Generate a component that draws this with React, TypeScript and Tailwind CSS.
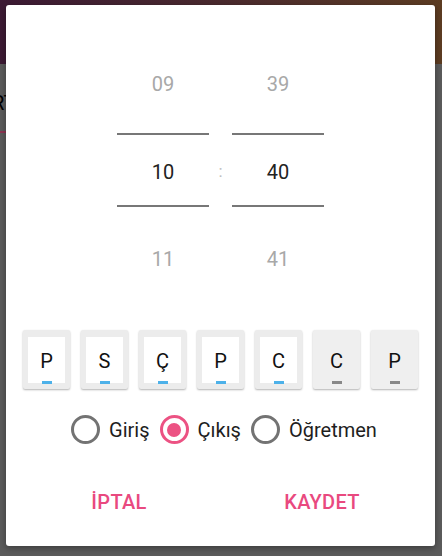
import React from "react";

const tiles = [
  { l: "P", on: true },
  { l: "S", on: true },
  { l: "Ç", on: true },
  { l: "P", on: true },
  { l: "C", on: true },
  { l: "C", on: false },
  { l: "P", on: false },
];

function Radio({ checked, label }: { checked?: boolean; label: string }) {
  return (
    <div className="flex items-center gap-[9px]">
      <div
        className={`w-[29px] h-[29px] rounded-full border-[3px] flex items-center justify-center ${
          checked ? "border-[#ec5283]" : "border-[#737373]"
        }`}
      >
        {checked && <div className="w-[14px] h-[14px] rounded-full bg-[#ec5283]" />}
      </div>
      <span className="text-[20px] text-[#1e1e1e] leading-none">{label}</span>
    </div>
  );
}

function Column({ a, b, c }: { a: string; b: string; c: string }) {
  return (
    <div className="w-[92px] flex flex-col items-stretch">
      <div className="h-[40px] flex items-center justify-center text-[20px] text-[#a8a8a8] pt-[2px]">{a}</div>
      <div className="h-[2px] bg-[#777777] mt-[30px]" />
      <div className="h-[70px] flex items-center justify-center text-[20px] text-[#222222] pt-[3px]">{b}</div>
      <div className="h-[2px] bg-[#777777]" />
      <div className="h-[40px] mt-[31px] flex items-center justify-center text-[20px] text-[#a8a8a8] pt-[2px]">{c}</div>
    </div>
  );
}

export default function App() {
  return (
    <div
      className="relative w-[442px] h-[556px] overflow-hidden bg-[#5b5b5b]"
      style={{ fontFamily: "Roboto, 'Noto Sans', sans-serif" }}
    >
      <div className="h-[64px] bg-gradient-to-r from-[#3c1a34] via-[#4a2a2e] to-[#5d3c22]" />
      <div className="h-[67px] flex items-center">
        <span className="text-[20px] text-black -ml-[8px] mt-[10px]">RT</span>
      </div>
      <div className="h-[2px] w-[60px] bg-[#8c3452]" />

      <div className="absolute left-[6px] top-[5px] w-[429px] h-[541px] bg-white rounded-[3px] shadow-[0_2px_6px_rgba(0,0,0,0.35)] flex flex-col">
        <div className="pt-[58px] flex justify-center">
          <Column a="09" b="10" c="11" />
          <div className="w-[23px] flex flex-col items-center">
            <div className="h-[72px]" />
            <div className="h-[70px] flex items-center justify-center text-[17px] text-[#bdbdbd] pt-[3px]">:</div>
          </div>
          <Column a="39" b="40" c="41" />
        </div>

        <div className="mt-[52px] flex justify-center gap-[11px]">
          {tiles.map((t, i) => (
            <div
              key={i}
              className={`w-[47px] h-[59px] rounded-[2px] shadow-[0_1px_2px_rgba(0,0,0,0.3)] pt-[7px] px-[5px] pb-[6px] ${
                t.on ? "bg-[#ececec]" : "bg-[#efefef]"
              }`}
            >
              <div className={`h-full flex flex-col items-center ${t.on ? "bg-white" : "bg-[#efefef]"}`}>
                <div className="flex-1 flex items-center justify-center text-[20px] text-[#111] pt-[3px]">{t.l}</div>
                <div className={`w-[10px] h-[3px] mb-[-1px] ${t.on ? "bg-[#4db1e9]" : "bg-[#888888]"}`} />
              </div>
            </div>
          ))}
        </div>

        <div className="mt-[26px] flex justify-center gap-[10px] pl-[7px]">
          <Radio label="Giriş" />
          <Radio checked label="Çıkış" />
          <Radio label="Öğretmen" />
        </div>

        <div className="mt-[43px] mx-[11.5px] grid grid-cols-2">
          <div className="flex justify-center text-[20px] font-medium text-[#e9497f] tracking-[0.3px]">İPTAL</div>
          <div className="flex justify-center text-[20px] font-medium text-[#e9497f] tracking-[0.3px]">KAYDET</div>
        </div>
      </div>
    </div>
  );
}
